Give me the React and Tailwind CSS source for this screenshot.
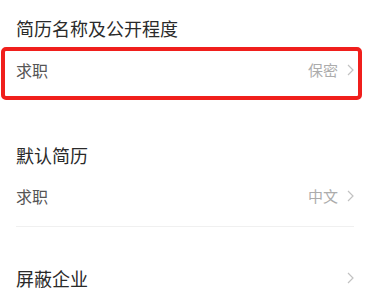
import React from 'react';

function Chevron() {
  return (
    <svg width="7" height="12" viewBox="0 0 7 12" className="shrink-0">
      <polyline points="1,1 6,6 1,11" fill="none" stroke="#c2c2c2" strokeWidth="1.2" />
    </svg>
  );
}

function Row({ label, value }) {
  return (
    <div className="flex items-center justify-between h-[24px]">
      <span className="text-[16px] leading-[24px] text-[#555]">{label}</span>
      <div className="flex items-center gap-[9px]">
        {value && <span className="text-[15px] leading-[24px] text-[#acacac]">{value}</span>}
        <Chevron />
      </div>
    </div>
  );
}

export default function App() {
  return (
    <div
      className="w-[369px] h-[290px] bg-white overflow-hidden"
      style={{ fontFamily: '"Noto Sans CJK SC", "Noto Sans", sans-serif' }}
    >
      <div className="pt-[16px] pl-4 h-[47px]">
        <h2 className="text-[18px] leading-[24px] text-[#2a2a2a]">简历名称及公开程度</h2>
      </div>

      <div className="ml-[1px] w-[361px] h-[53px] border-[4px] border-[#f01f1c] rounded-[5px] flex flex-col justify-center pl-[11px] pr-[4px] pb-[8px]">
        <Row label="求职" value="保密" />
      </div>

      <div className="pl-4 pr-[15px]">
        <h2 className="mt-[43px] text-[18px] leading-[24px] text-[#2a2a2a]">默认简历</h2>
        <div className="mt-[17px]">
          <Row label="求职" value="中文" />
        </div>
        <div className="mt-[18px] h-px bg-[#f0f0f0]" />
        <div className="mt-[39px] flex items-center justify-between">
          <span className="text-[18px] leading-[24px] text-[#2a2a2a]">屏蔽企业</span>
          <Chevron />
        </div>
      </div>
    </div>
  );
}
